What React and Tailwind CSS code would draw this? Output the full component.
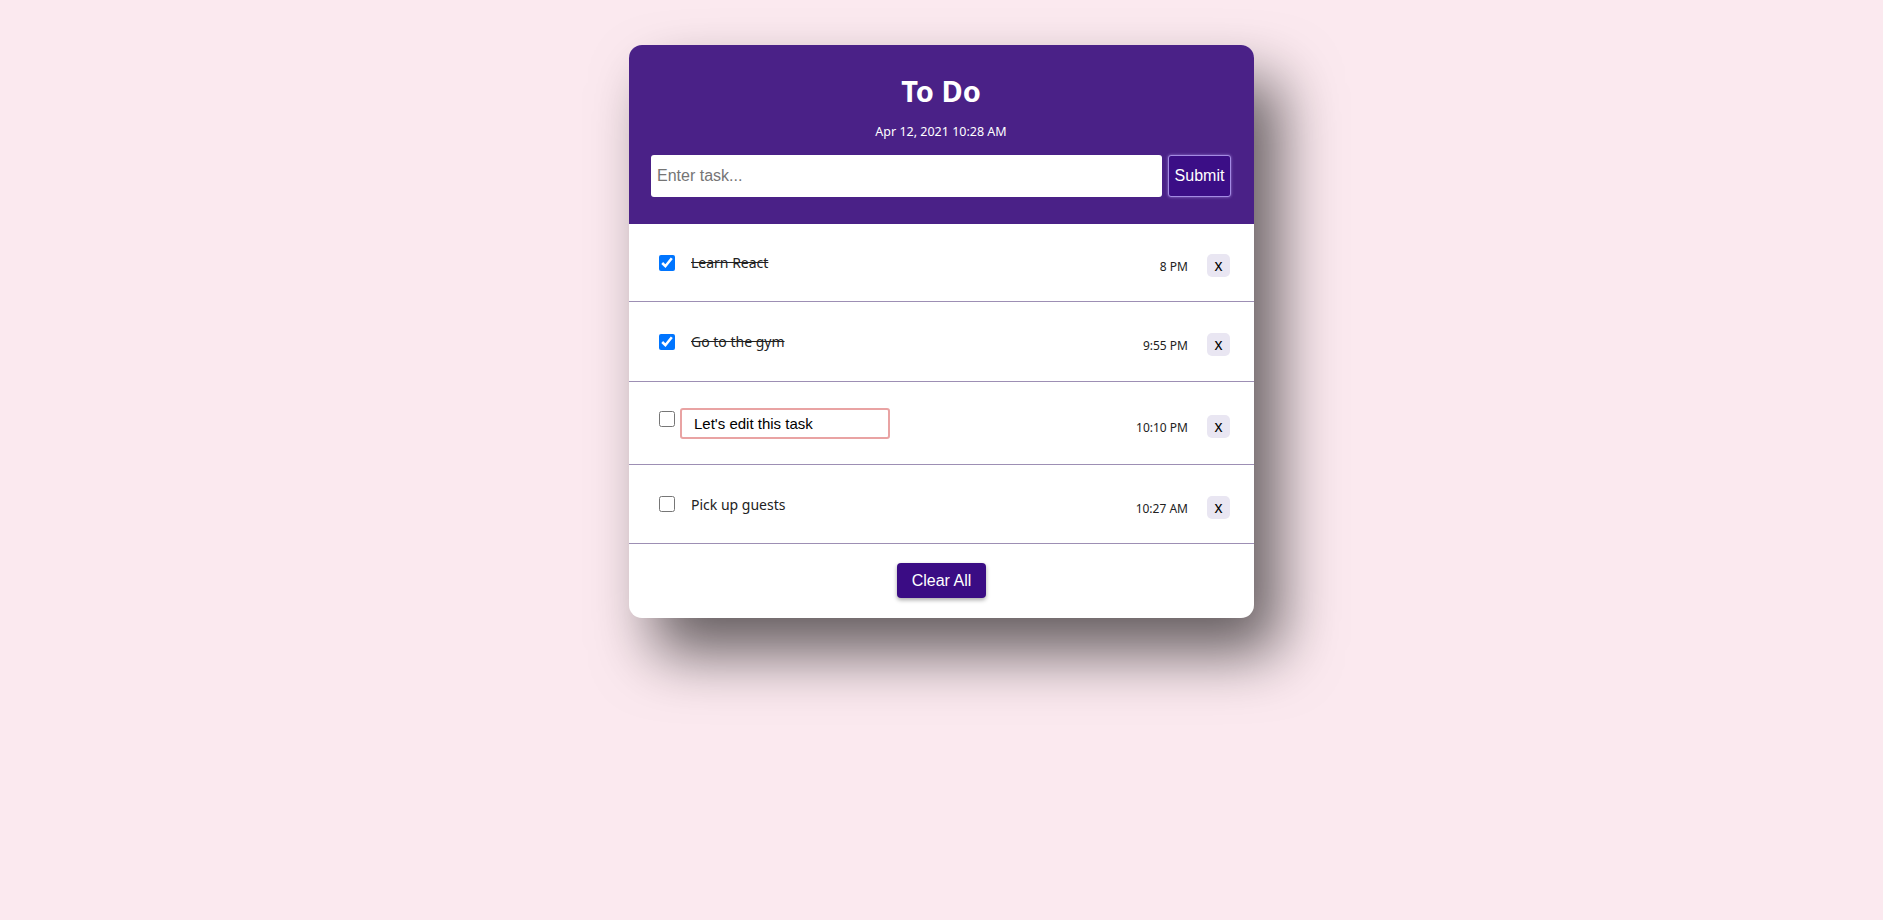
import React from "react";

const tasks = [
  { id: 1, text: "Learn React", time: "8 PM", done: true, h: "h-[78px]" },
  { id: 2, text: "Go to the gym", time: "9:55 PM", done: true, h: "h-[80px]" },
  { id: 3, text: "Let's edit this task", time: "10:10 PM", done: false, editing: true, h: "h-[83px]" },
  { id: 4, text: "Pick up guests", time: "10:27 AM", done: false, h: "h-[79px]" },
];

function Row({ t }) {
  return (
    <div className={`flex items-center justify-between border-b border-[#9d8fb4] pl-[30px] pr-[24px] ${t.h}`}>
      <div className={`flex ${t.editing ? "items-start" : "items-center"}`}>
        <input
          type="checkbox"
          defaultChecked={t.done}
          className={`w-4 h-4 m-0 ${t.editing ? "mt-[3px]" : ""}`}
        />
        {t.editing ? (
          <input
            type="text"
            defaultValue={t.text}
            className="ml-[5px] w-[210px] h-[31px] border-2 border-[#e9a3a3] rounded-[3px] pl-[12px] text-[15px] text-black font-['Liberation_Sans',Arial,sans-serif] outline-none bg-white"
          />
        ) : (
          <span
            className={`ml-4 text-[14px] text-[#222] font-['Noto_Sans',sans-serif] ${t.done ? "line-through" : ""}`}
          >
            {t.text}
          </span>
        )}
      </div>
      <div className="flex items-center mt-[6px]">
        <span className="text-[12px] text-[#222] font-['Noto_Sans',sans-serif] mt-[3px]">{t.time}</span>
        <button className="ml-[19px] w-[23px] h-[23px] rounded-[5px] bg-[#e9e6f2] text-black text-[16px] leading-[23px] font-['Liberation_Sans',Arial,sans-serif] flex items-center justify-center">
          x
        </button>
      </div>
    </div>
  );
}

export default function App() {
  return (
    <div className="min-h-screen w-full bg-[#fbe9ef] pt-[45px]">
      <div className="mx-auto w-[625px] rounded-[13px] overflow-hidden bg-white shadow-[25px_35px_60px_rgba(0,0,0,0.6)]">
        <div className="bg-[#4a2187] pt-[28px] pb-[27px] pl-[22px] pr-[23px] flex flex-col items-center">
          <h1 className="text-white font-bold text-[29px] leading-[36px] font-['Noto_Sans',sans-serif]">To Do</h1>
          <div className="mt-[15px] text-white text-[12.5px] leading-[16px] font-['Noto_Sans',sans-serif]">
            Apr 12, 2021 10:28 AM
          </div>
          <div className="mt-[15px] flex w-full gap-[6px]">
            <input
              type="text"
              placeholder="Enter task..."
              className="flex-1 h-[42px] bg-white rounded-[3px] px-[6px] text-[16px] text-black placeholder:text-[#757575] font-['Liberation_Sans',Arial,sans-serif] outline-none"
            />
            <button className="w-[63px] h-[42px] bg-[#3b0e86] border border-[#a48be3] rounded-[3px] text-white text-[16px] font-['Liberation_Sans',Arial,sans-serif] shadow-[0_0_3px_rgba(200,180,255,0.6)]">
              Submit
            </button>
          </div>
        </div>
        {tasks.map((t) => (
          <Row key={t.id} t={t} />
        ))}
        <div className="flex justify-center pt-[19px] pb-[20px]">
          <button className="w-[89px] h-[35px] bg-[#3a0c84] rounded-[4px] text-white text-[16px] font-['Liberation_Sans',Arial,sans-serif] shadow-[0_2px_4px_rgba(0,0,0,0.35)]">
            Clear All
          </button>
        </div>
      </div>
    </div>
  );
}
